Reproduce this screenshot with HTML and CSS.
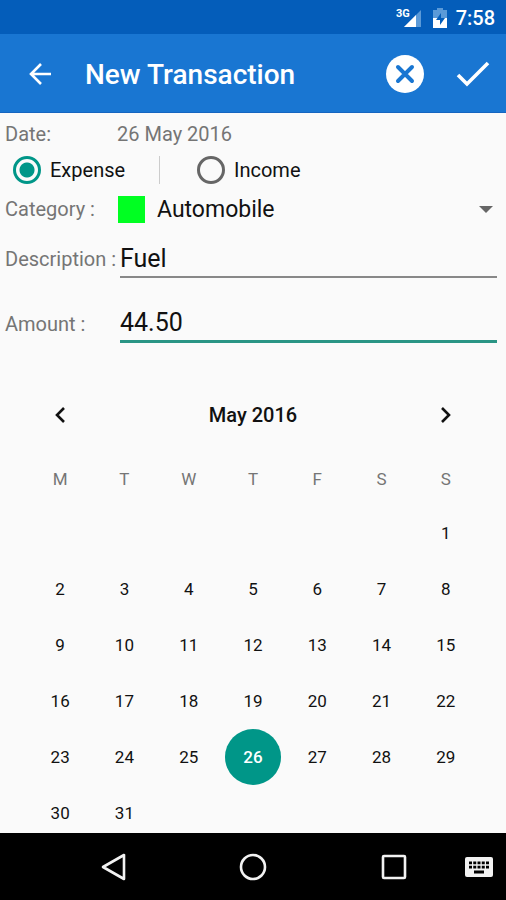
FILE: index.html
```
<!DOCTYPE html>
<html lang="en">
<head>
	<meta charset="utf-8">
	<meta name="viewport" content="width=device-width, initial-scale=1">
	<title>New Transaction</title>
	<link rel="stylesheet" href="styles.css">
</head>
<body>
	<div class="status">
		<svg class="signal" width="26" height="22" viewBox="0 0 26 22">
			<path d="M25 3v17H8z" fill="#5b9ad8"/>
			<path d="M20 8v12H8z" fill="#fff"/>
			<text x="0" y="10">3G</text>
		</svg>
		<svg width="14" height="20" viewBox="0 0 14 20">
			<path d="M4 0h6v2h4v8H0V2h4z" fill="#5b9ad8"/>
			<path d="M0 10h14v10H0z" fill="#fff"/>
			<path d="M8 5l-5 7h4v5l5-7H8z" fill="#045dba"/>
		</svg>
		<span>7:58</span>
	</div>
	<header class="bar">
		<button class="back" aria-label="Back">
			<svg width="24" height="24" viewBox="0 0 24 24"><path d="M23 12H3M13 2L3 12l10 10" fill="none" stroke="#fff" stroke-width="2.6"/></svg>
		</button>
		<h1>New Transaction</h1>
		<button aria-label="Cancel">
			<svg width="38" height="38" viewBox="0 0 38 38">
				<circle cx="19" cy="19" r="19" fill="#fff"/>
				<path d="M12 12l14 14M26 12L12 26" stroke="#1976d2" stroke-width="4" stroke-linecap="round"/>
			</svg>
		</button>
		<button aria-label="Save">
			<svg width="34" height="26" viewBox="0 0 34 26"><path d="M2 14l9 9L32 2" fill="none" stroke="#fff" stroke-width="3.6"/></svg>
		</button>
	</header>
	<main>
		<form class="form">
			<div class="row">
				<span class="name">Date:</span>
				<span class="date">26 May 2016</span>
			</div>
			<div class="row types">
				<input type="radio" name="type" id="expense" checked>
				<label for="expense">Expense</label>
				<span class="line"></span>
				<input type="radio" name="type" id="income">
				<label for="income">Income</label>
			</div>
			<div class="row category">
				<label class="name" for="category">Category :</label>
				<span class="color"></span>
				<select id="category">
					<option>Automobile</option>
				</select>
				<svg width="14" height="7" viewBox="0 0 14 7"><path d="M0 0h14L7 7z" fill="#666"/></svg>
			</div>
			<div class="row description">
				<label class="name" for="description">Description :</label>
				<input type="text" id="description" value="Fuel">
			</div>
			<div class="row amount">
				<label class="name" for="amount">Amount :</label>
				<input type="text" id="amount" value="44.50">
			</div>
		</form>
		<section class="calendar">
			<div class="month">
				<button aria-label="Previous month">
					<svg width="12" height="18" viewBox="0 0 12 18"><path d="M10 2L3 9l7 7" fill="none" stroke="#111" stroke-width="2.6"/></svg>
				</button>
				<h2>May 2016</h2>
				<button aria-label="Next month">
					<svg width="12" height="18" viewBox="0 0 12 18"><path d="M2 2l7 7-7 7" fill="none" stroke="#111" stroke-width="2.6"/></svg>
				</button>
			</div>
			<table>
				<thead>
					<tr><th>M</th><th>T</th><th>W</th><th>T</th><th>F</th><th>S</th><th>S</th></tr>
				</thead>
				<tbody>
					<tr><td></td><td></td><td></td><td></td><td></td><td></td><td>1</td></tr>
					<tr><td>2</td><td>3</td><td>4</td><td>5</td><td>6</td><td>7</td><td>8</td></tr>
					<tr><td>9</td><td>10</td><td>11</td><td>12</td><td>13</td><td>14</td><td>15</td></tr>
					<tr><td>16</td><td>17</td><td>18</td><td>19</td><td>20</td><td>21</td><td>22</td></tr>
					<tr><td>23</td><td>24</td><td>25</td><td><span class="today">26</span></td><td>27</td><td>28</td><td>29</td></tr>
					<tr><td>30</td><td>31</td><td></td><td></td><td></td><td></td><td></td></tr>
				</tbody>
			</table>
		</section>
	</main>
	<nav class="nav">
		<button aria-label="Back">
			<svg width="28" height="28" viewBox="0 0 28 28"><path d="M25 2v24L4 14z" fill="none" stroke="#f2f2f2" stroke-width="2.6" stroke-linejoin="round"/></svg>
		</button>
		<button aria-label="Home">
			<svg width="28" height="28" viewBox="0 0 28 28"><circle cx="14" cy="14" r="12" fill="none" stroke="#f2f2f2" stroke-width="2.6"/></svg>
		</button>
		<button aria-label="Recent apps">
			<svg width="28" height="28" viewBox="0 0 28 28"><rect x="4" y="3" width="22" height="22" rx="1" fill="none" stroke="#f2f2f2" stroke-width="2.6"/></svg>
		</button>
		<button class="keyboard" aria-label="Keyboard">
			<svg width="28" height="20" viewBox="0 0 28 20">
				<rect width="28" height="20" rx="2" fill="#f2f2f2"/>
				<path d="M4 6h20M4 10h20" stroke="#000" stroke-width="3" stroke-dasharray="3 1.25"/>
				<path d="M4 8h20" stroke="#f2f2f2"/>
				<path d="M9 15h10" stroke="#000" stroke-width="3"/>
			</svg>
		</button>
	</nav>
</body>
</html>
```
FILE: styles.css
```
*{
	box-sizing: border-box;
}
body{
	margin:0;
	height:100vh;
	display: flex;
	flex-direction: column;
	font-family: Roboto, sans-serif;
	font-size:20px;
	color:#111;
	background-color: #fafafa;
}
button{
	display: flex;
	align-items: center;
	justify-content: center;
	padding:0;
	border:0;
	background: none;
	cursor: pointer;
}
.status{
	display: flex;
	align-items: center;
	justify-content: flex-end;
	height:34px;
	padding:2px 11px 0 0;
	color:white;
	font-weight: 500;
	background-color: #045dba;
}
.status span{
	margin-left: 9px;
}
.signal{
	margin-right: 11px;
}
.signal text{
	font-size: 11px;
	font-weight: bold;
	fill:white;
}
.bar{
	display: flex;
	align-items: center;
	height:79px;
	padding:2px 16px 0 28px;
	color:white;
	background-color: #1976d2;
	border-bottom: 1px solid #1565c0;
}
.bar h1{
	flex:1;
	margin:0 0 0 33px;
	font-size: 28px;
	font-weight: 500;
}
.bar button + button{
	margin-left: 32px;
}
main{
	flex:1;
	min-height: 0;
	overflow: hidden;
}
.form{
	padding:3px 9px 0 5px;
}
.row{
	display: flex;
	align-items: center;
	height:36px;
}
.name{
	width:112px;
	flex:none;
	white-space: nowrap;
}
.name, .date{
	color:#757575;
}
.types{
	padding-left: 8px;
}
.types input{
	appearance: none;
	width:28px;
	height:28px;
	margin:0 9px 0 0;
	border:3px solid #666;
	border-radius: 50%;
}
.types input:checked{
	border-color: #009688;
	background: radial-gradient(circle, #009688 7px, transparent 8px);
}
.types label{
	width:74px;
}
.line{
	width:1px;
	height:28px;
	margin:0 37px 0 35px;
	background-color: #ccc;
}
.category{
	height:42px;
	padding-right: 4px;
}
.color{
	width:27px;
	height:27px;
	margin:0 12px 0 1px;
	background-color: #0f2;
}
select{
	flex:1;
	appearance: none;
	padding:0;
	border:0;
	font:inherit;
	font-size: 23px;
	color:inherit;
	background: none;
}
.description{
	height:58px;
}
.amount{
	height:72px;
}
input[type=text]{
	flex:1;
	min-width: 0;
	height:38px;
	margin-left: 3px;
	padding:0;
	border:0;
	border-bottom: 2px solid #888;
	outline: none;
	font:inherit;
	font-size: 25px;
	color:inherit;
	background: none;
}
#amount{
	border-bottom: 3px solid #2a9585;
}
.calendar{
	padding:17px 28px 0;
}
.month{
	display: flex;
	align-items: center;
	justify-content: space-between;
	height:76px;
}
.month button{
	width:64px;
	height:56px;
}
.month h2{
	margin:0;
	font-size: 20px;
	font-weight: 500;
}
table{
	width:100%;
	table-layout: fixed;
	border-collapse: collapse;
	font-size: 17px;
	text-align: center;
}
th{
	height:52px;
	padding:0;
	font-weight: normal;
	color:#757575;
}
td{
	height:56px;
	padding:0;
}
.today{
	display: block;
	width:56px;
	margin:0 auto;
	border-radius: 50%;
	line-height: 56px;
	font-weight: 500;
	color:white;
	background-color: #009688;
}
.nav{
	position: relative;
	display: flex;
	justify-content: center;
	gap:112px;
	height:67px;
	background-color: black;
}
.keyboard{
	position: absolute;
	top:0;
	right:13px;
	height:100%;
}
```
